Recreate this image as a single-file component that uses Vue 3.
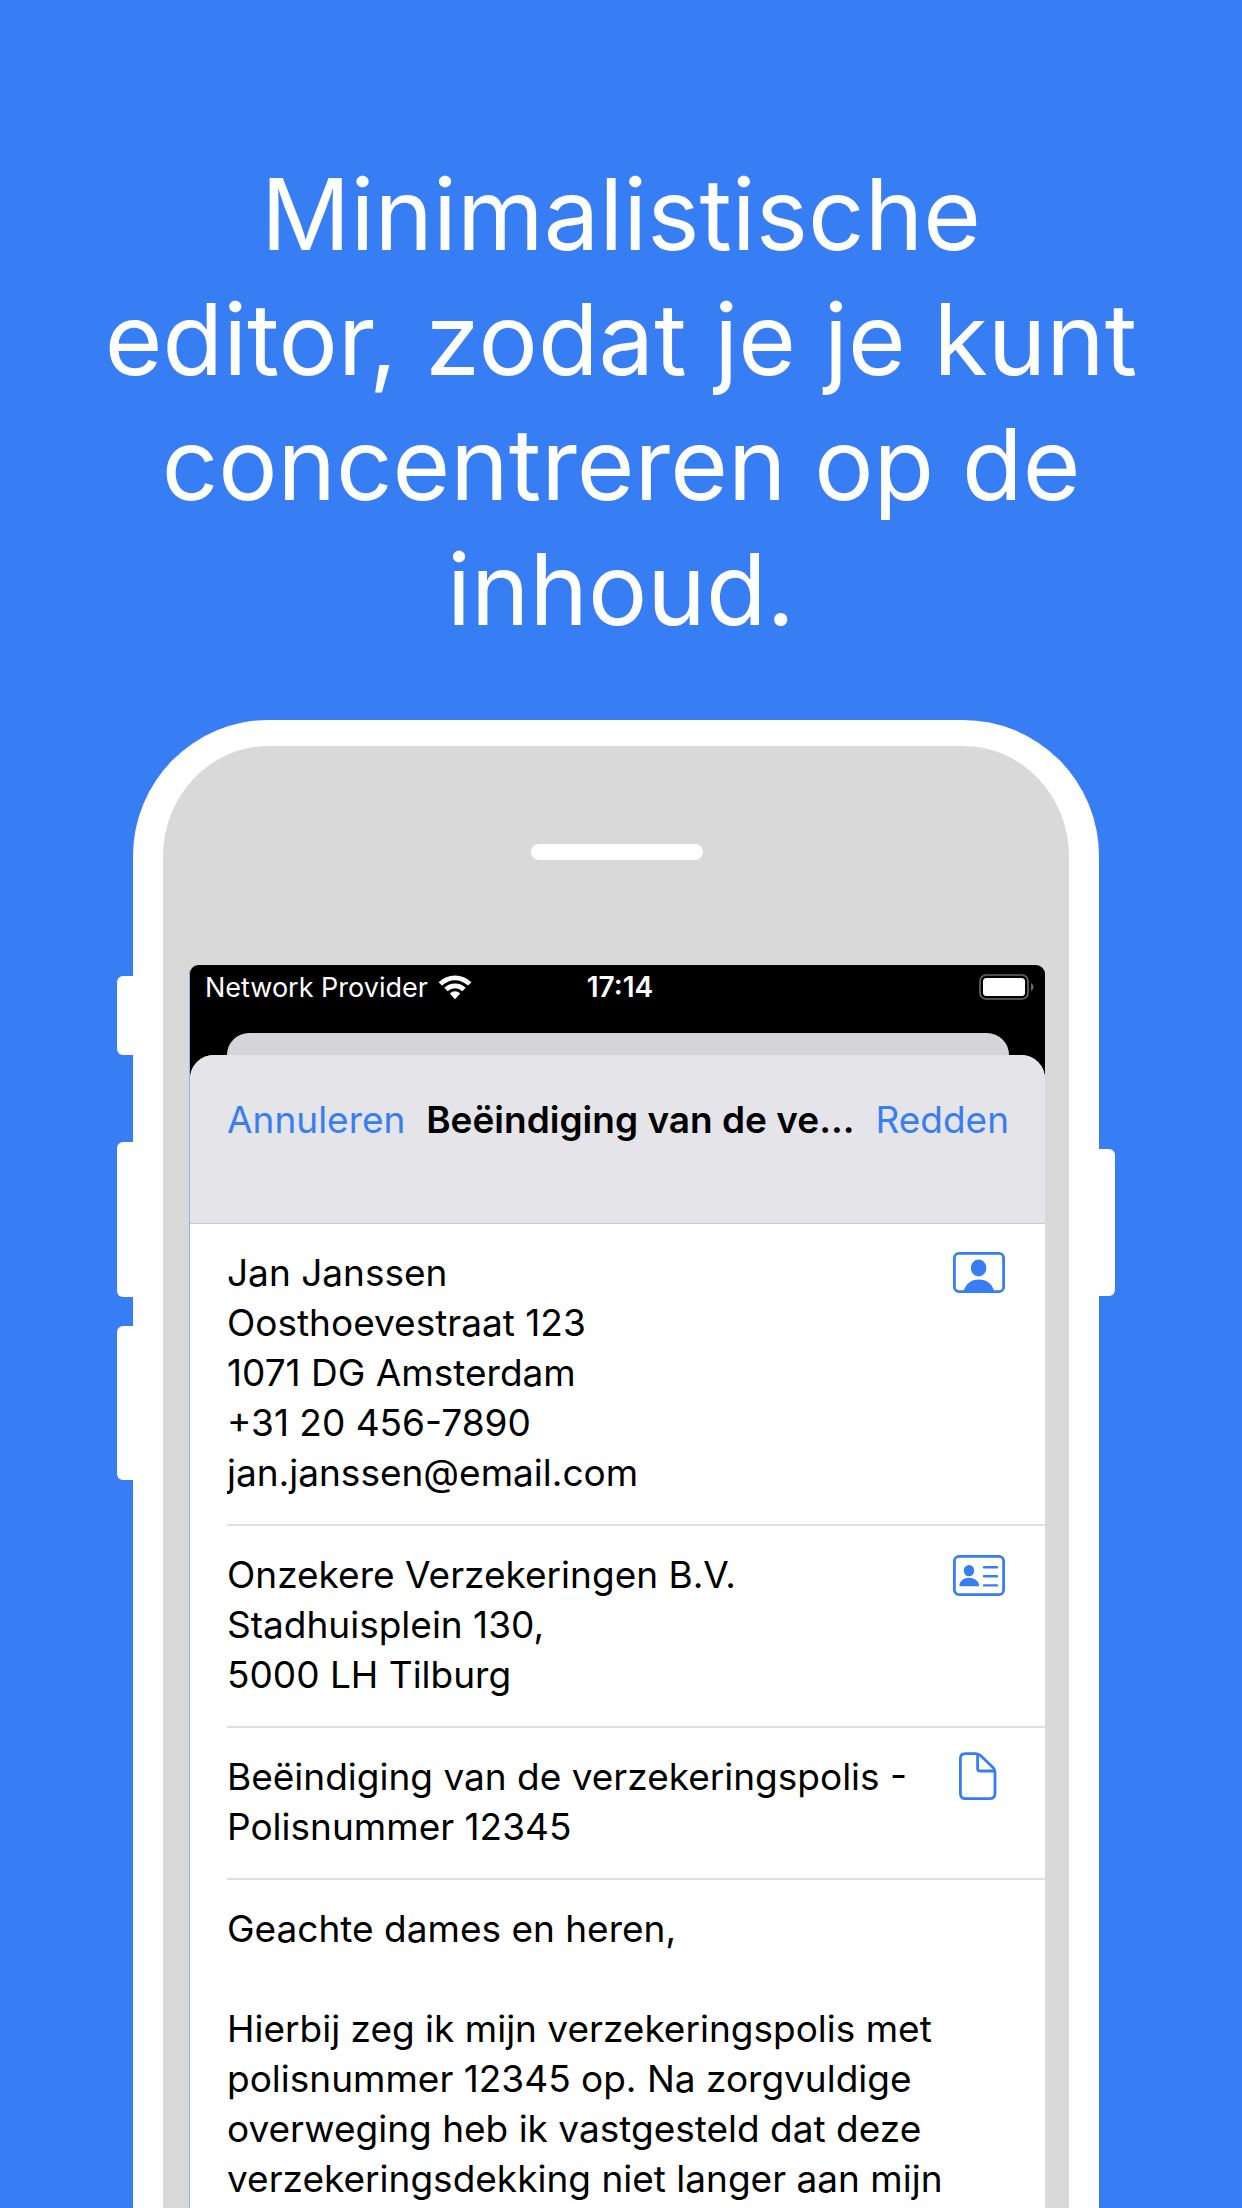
<script setup>
const sideKeys = [
  { name: 'mute', side: 'left' },
  { name: 'volume-up', side: 'left' },
  { name: 'volume-down', side: 'left' },
  { name: 'power', side: 'right' },
]

const fields = [
  {
    id: 'sender',
    label: 'Afzender',
    rows: 5,
    icon: 'portrait',
    text: 'Jan Janssen\nOosthoevestraat 123\n1071 DG Amsterdam\n+31 20 456-7890\njan.janssen@email.com',
  },
  {
    id: 'recipient',
    label: 'Ontvanger',
    rows: 3,
    icon: 'card',
    text: 'Onzekere Verzekeringen B.V.\nStadhuisplein 130,\n5000 LH Tilburg',
  },
  {
    id: 'subject',
    label: 'Onderwerp',
    rows: 2,
    icon: 'document',
    text: 'Beëindiging van de verzekeringspolis - Polisnummer 12345',
  },
]

const letter =
  'Geachte dames en heren,\n\nHierbij zeg ik mijn verzekeringspolis met polisnummer 12345 op. Na zorgvuldige overweging heb ik vastgesteld dat deze verzekeringsdekking niet langer aan mijn'
</script>

<template>
  <main class="page">
    <h1 class="headline">Minimalistische<br />editor, zodat je je kunt<br />concentreren op de<br />inhoud.</h1>

    <div class="phone">
      <span v-for="key in sideKeys" :key="key.name" class="key" :class="[key.side, key.name]"></span>

      <div class="bezel">
        <span class="speaker"></span>

        <div class="screen">
          <div class="status">
            <div class="carrier">
              <span>Network Provider</span>
              <svg class="wifi" viewBox="0 0 34 25" aria-hidden="true">
                <path d="M0.6 7.2 A23.4 23.4 0 0 1 33.4 7.2 L30 10.6 A18.6 18.6 0 0 0 4 10.6Z" />
                <path d="M6.3 12.8 A15.3 15.3 0 0 1 27.7 12.8 L24.3 16.2 A10.5 10.5 0 0 0 9.7 16.2Z" />
                <path d="M11.8 18.4 A7.6 7.6 0 0 1 22.2 18.4 L17 24.2Z" />
              </svg>
            </div>
            <time class="clock">17:14</time>
            <svg class="battery" viewBox="0 0 56 26" aria-hidden="true">
              <rect x="1" y="1" width="48" height="24" rx="6" fill="none" stroke="#6b6b6b" stroke-width="1.6" />
              <rect x="4" y="4" width="42" height="18" rx="3.5" fill="#fff" />
              <path d="M52 9 Q54.6 10.5 54.6 13 Q54.6 15.5 52 17Z" fill="#6b6b6b" />
            </svg>
          </div>

          <div class="sheet-behind"></div>

          <form class="sheet" @submit.prevent>
            <header class="bar">
              <button type="button" class="action">Annuleren</button>
              <h2 class="title">Beëindiging van de ve...</h2>
              <button type="submit" class="action">Redden</button>
            </header>

            <div v-for="field in fields" :key="field.id" class="row">
              <textarea
                :id="field.id"
                :rows="field.rows"
                :aria-label="field.label"
                class="text"
                spellcheck="false"
              >{{ field.text }}</textarea>
              <button type="button" class="pick" :aria-label="field.label + ' kiezen'">
                <svg v-if="field.icon === 'portrait'" class="icon" viewBox="0 0 52 50">
                  <rect x="1.4" y="5.4" width="49.2" height="38.2" rx="4.6" class="line" />
                  <ellipse cx="25.6" cy="20" rx="7.7" ry="8.4" />
                  <path d="M10.6 43.5 C12.5 36 18 31.6 25.8 31.6 C33.6 31.6 39.5 36 41.2 43.5Z" />
                </svg>
                <svg v-else-if="field.icon === 'card'" class="icon" viewBox="0 0 52 50">
                  <rect x="1.4" y="6.4" width="49.2" height="38.2" rx="4.6" class="line" />
                  <ellipse cx="16" cy="20.6" rx="5.2" ry="5.7" />
                  <path d="M6.4 36.2 C6 31.4 10.4 27.8 16 27.8 C21.8 27.8 26.4 31.4 26 36.2Z" />
                  <path d="M31 17.3H44 M31 26.3H44 M31 35.4H44" class="line thin" />
                </svg>
                <svg v-else class="icon" viewBox="0 0 52 50">
                  <path
                    d="M12.2 1.6H22.8C25 1.6 26.2 2.2 27.8 3.8L40 15.6C41.4 17 42 18.2 42 20.2V41.4C42 44.6 40 46.6 36.8 46.6H12.4C9.2 46.6 7.4 44.6 7.4 41.4V6.6C7.4 3.4 9.2 1.6 12.2 1.6Z"
                    class="line"
                  />
                  <path d="M24.6 2V16.4C24.6 18.2 25.6 19 27.2 19H41.6" class="line" />
                </svg>
              </button>
            </div>

            <div class="row letter">
              <textarea id="letter" rows="6" aria-label="Brief" class="text" spellcheck="false">{{ letter }}</textarea>
            </div>
          </form>
        </div>
      </div>
    </div>
  </main>
</template>

<style>
body {
  margin: 0;
  background: #377ef5;
}
</style>

<style scoped>
.page {
  box-sizing: border-box;
  height: 100vh;
  overflow: hidden;
  display: flex;
  flex-direction: column;
  gap: 68px;
  padding-top: 152px;
  background: #377ef5;
  font-family: Inter, 'Liberation Sans', sans-serif;
}

.headline {
  margin: 0 80px;
  color: #fff;
  font-size: 99px;
  font-weight: 400;
  line-height: 125px;
  text-align: center;
}

.phone {
  position: relative;
  flex: 1;
  display: flex;
  margin: 0 143px 0 133px;
}

.key {
  position: absolute;
  width: 24px;
  background: #fff;
  border-radius: 6px;
}

.key.left {
  left: -16px;
}

.key.right {
  right: -16px;
}

.mute {
  top: 256px;
  height: 79px;
}

.volume-up {
  top: 422px;
  height: 155px;
}

.volume-down {
  top: 606px;
  height: 154px;
}

.power {
  top: 429px;
  height: 147px;
}

.bezel {
  position: relative;
  flex: 1;
  min-width: 0;
  display: flex;
  flex-direction: column;
  align-items: center;
  padding: 98px 24px 0 26px;
  background: #d9d9d9;
  border: solid #fff;
  border-width: 26px 30px 0;
  border-radius: 136px 136px 0 0;
}

.speaker {
  width: 172px;
  height: 16px;
  border-radius: 8px;
  background: #fff;
}

.screen {
  align-self: stretch;
  flex: 1;
  display: flex;
  flex-direction: column;
  margin-top: 105px;
  border-left: 1px solid #8fb0ee;
  border-radius: 9px 9px 0 0;
  background: #000;
  overflow: hidden;
}

.status {
  display: grid;
  grid-template-columns: 1fr auto 1fr;
  align-items: center;
  height: 44px;
  padding: 0 10px 0 15px;
  margin-bottom: 24px;
  color: #fff;
  font-size: 27px;
}

.carrier {
  display: flex;
  align-items: center;
  gap: 10px;
  white-space: nowrap;
}

.wifi {
  width: 34px;
  height: 25px;
  fill: #fff;
}

.clock {
  font-size: 28px;
  font-weight: 600;
}

.battery {
  justify-self: end;
  width: 56px;
  height: 26px;
}

.sheet-behind {
  height: 22px;
  margin: 0 36px 0 37px;
  background: #d5d4d9;
  border-radius: 22px 22px 0 0;
}

.sheet {
  flex: 1;
  display: flex;
  flex-direction: column;
  background: #fff;
  border-radius: 24px 24px 0 0;
  overflow: hidden;
}

.bar {
  display: flex;
  align-items: flex-start;
  gap: 16px;
  height: 128px;
  padding: 40px 36px 0 37px;
  background: #e5e4e9;
  border-bottom: 1px solid #c8c8c8;
}

.action {
  padding: 0;
  border: 0;
  background: none;
  color: #377ef5;
  font: inherit;
  font-size: 37px;
  line-height: 50px;
}

.title {
  flex: 1;
  min-width: 0;
  margin: 0;
  color: #000;
  font-size: 37px;
  font-weight: 600;
  line-height: 50px;
  text-align: center;
  white-space: nowrap;
}

.row {
  display: flex;
  align-items: flex-start;
  gap: 20px;
  margin-left: 37px;
  padding: 24px 40px 26px 0;
  border-bottom: 2px solid #dedede;
}

.letter {
  flex: 1;
  padding-right: 60px;
  border-bottom: 0;
}

.text {
  flex: 1;
  min-width: 0;
  padding: 0;
  border: 0;
  outline: 0;
  resize: none;
  overflow: hidden;
  background: none;
  color: #000;
  font: inherit;
  font-size: 37px;
  line-height: 50px;
}

.pick {
  display: flex;
  padding: 0;
  border: 0;
  background: none;
}

.icon {
  width: 52px;
  height: 50px;
  fill: #377ef5;
}

.line {
  fill: none;
  stroke: #377ef5;
  stroke-width: 2.8;
}

.thin {
  stroke-width: 2.4;
  stroke-linecap: round;
}
</style>
